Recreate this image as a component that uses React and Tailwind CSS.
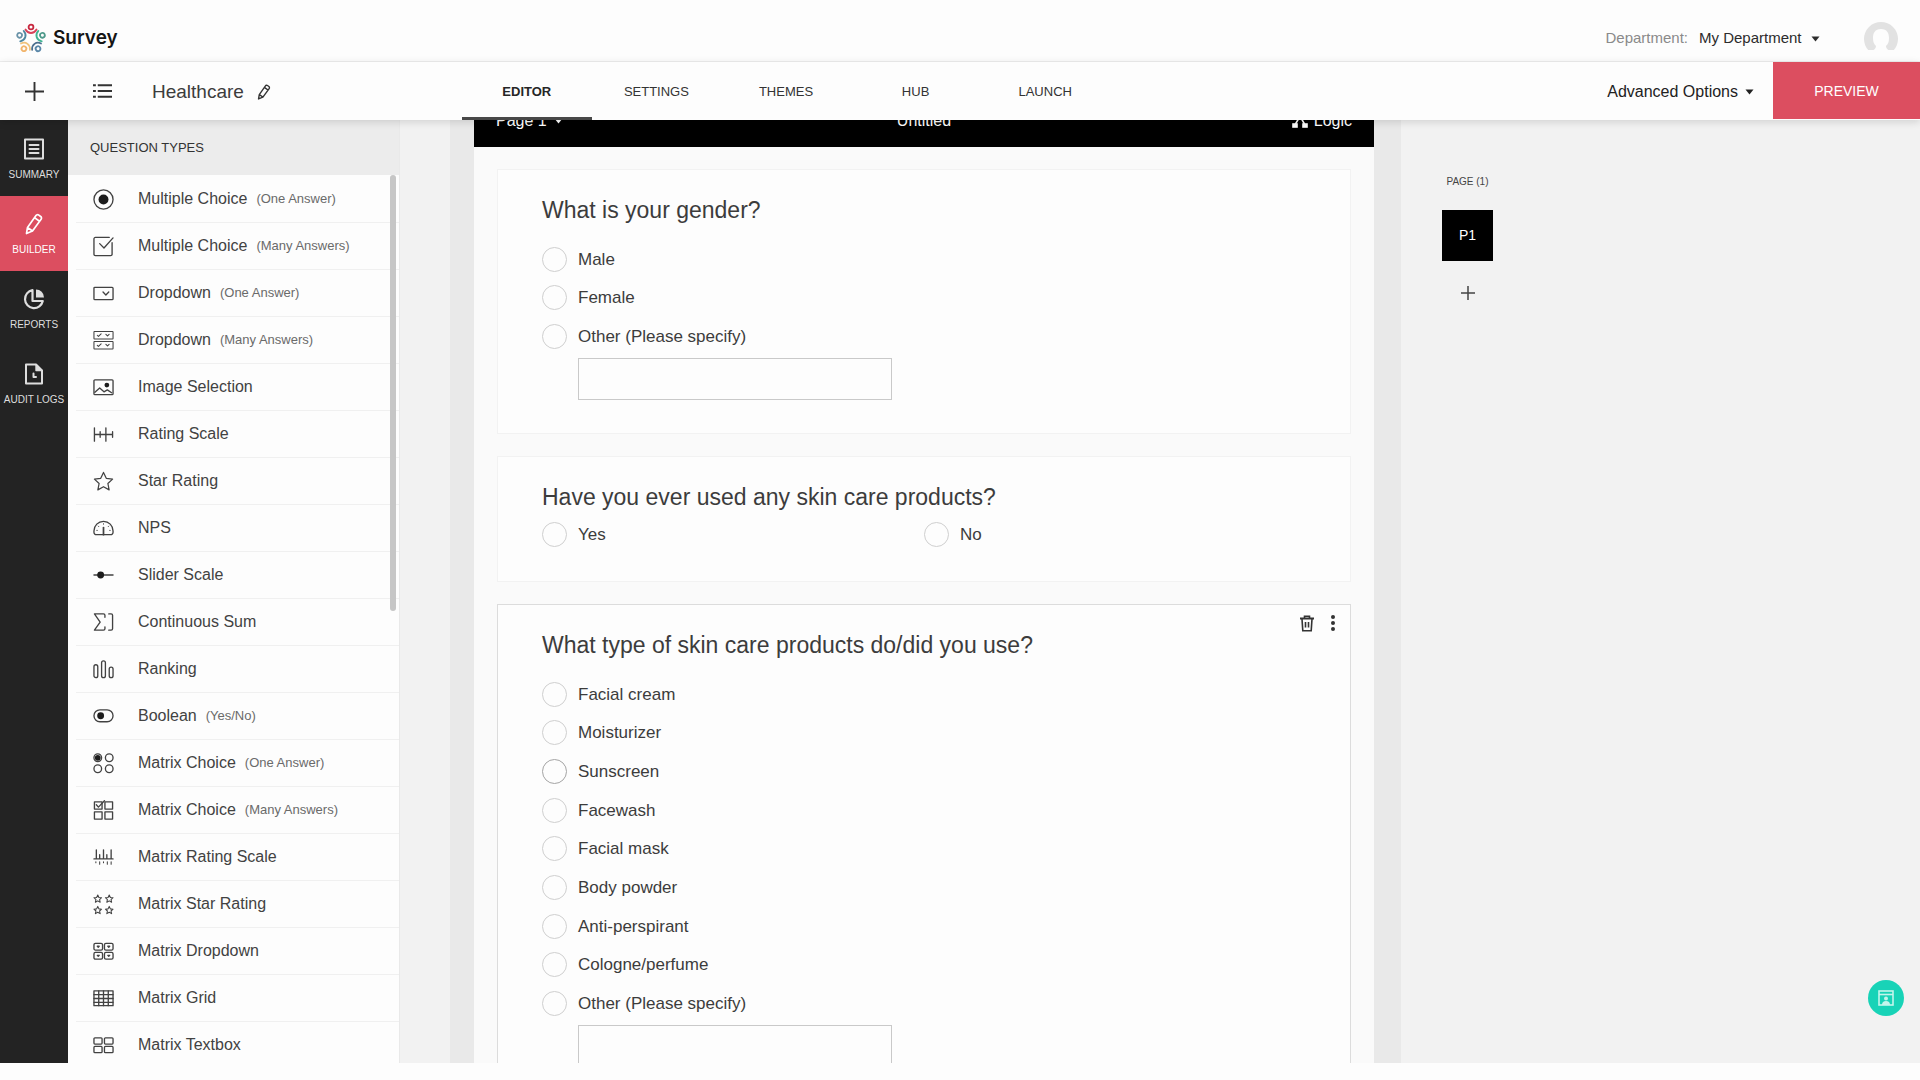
import { useState } from 'react';

const starPath = 'M11 1.5l2.9 6.2 6.6.8-4.9 4.6 1.3 6.7-5.9-3.3-5.9 3.3 1.3-6.7L1.5 8.5l6.6-.8z';
const smallStar = 'M0-4l1.2 2.6 2.8.3-2.1 1.9.6 2.8L0 2.2l-2.5 1.4.6-2.8L-4-1.1l2.8-.3z';

function Glyph({ children, size = 21 }) {
  return (
    <svg
      width={size}
      height={size}
      viewBox="0 0 22 22"
      fill="none"
      stroke="currentColor"
      strokeWidth="1.4"
      strokeLinecap="round"
      strokeLinejoin="round"
      className="shrink-0"
      aria-hidden="true"
    >
      {children}
    </svg>
  );
}

function Caret({ className }) {
  return (
    <svg width="9" height="6" viewBox="0 0 9 6" fill="currentColor" className={className} aria-hidden="true">
      <path d="M.5.5h8l-4 5z" />
    </svg>
  );
}

const questionTypes = [
  {
    name: 'Multiple Choice',
    hint: '(One Answer)',
    icon: (
      <>
        <circle cx="11" cy="11" r="10" />
        <circle cx="11" cy="11" r="5.2" fill="#1c1c1c" stroke="none" />
      </>
    ),
  },
  {
    name: 'Multiple Choice',
    hint: '(Many Answers)',
    icon: (
      <>
        <path d="M17 1.5H2.5A1.500 1.500 0 0 0 1 3v16a1.500 1.500 0 0 0 1.500 1.500h16A1.500 1.500 0 0 0 20 19V7" />
        <path d="M7 8l4.500 4.500L21 2" />
      </>
    ),
  },
  {
    name: 'Dropdown',
    hint: '(One Answer)',
    icon: (
      <>
        <rect x="1" y="4.5" width="20" height="13" rx="1" />
        <path d="M10.500 9.500l3 3 3-3" />
      </>
    ),
  },
  {
    name: 'Dropdown',
    hint: '(Many Answers)',
    icon: (
      <g strokeWidth="1.1">
        <rect x="1" y="1.5" width="20" height="8" rx=".5" />
        <rect x="1" y="12" width="20" height="8" rx=".5" />
        <path d="M4.500 5.500l1.200 1.200L8.500 4M13.500 4.500l1.700 1.700 1.700-1.700M4.500 16l1.200 1.200L8.500 14.500M13.500 15l1.700 1.700 1.700-1.700" />
      </g>
    ),
  },
  {
    name: 'Image Selection',
    icon: (
      <>
        <rect x="1" y="3" width="20" height="15.5" rx="1" />
        <circle cx="14.5" cy="8.5" r="2.5" fill="#1c1c1c" stroke="none" />
        <path d="M2 16l5-4.500 4.500 4 3.500-2 4.500 3" />
      </>
    ),
  },
  {
    name: 'Rating Scale',
    icon: <path d="M1.500 4v14M7.500 8v6M13.500 4v14M20.500 8v6M1.500 11h19" />,
  },
  { name: 'Star Rating', icon: <path d={starPath} strokeWidth="1.3" /> },
  {
    name: 'NPS',
    icon: (
      <>
        <path d="M3.500 17.500A2.500 2.500 0 0 1 1 15v-1.500a10 10 0 0 1 20 0V15a2.500 2.500 0 0 1-2.500 2.500z" />
        <path d="M11 10v7.500" strokeWidth="1.8" />
        <path d="M11 6v.5M5.500 8.500l.5.5M16.500 8.500l-.5.5M4 13h.5M17.500 13h.5" strokeWidth="1" />
      </>
    ),
  },
  {
    name: 'Slider Scale',
    icon: (
      <>
        <path d="M1 10.500h20" />
        <circle cx="8" cy="10.5" r="3.6" fill="#1c1c1c" stroke="none" />
      </>
    ),
  },
  {
    name: 'Continuous Sum',
    icon: (
      <path d="M12.500 5.500v-2Q12.500 2 11 2H1.500l6 8.500-6 8.500H11q1.500 0 1.500-1.500v-2M16.500 2H19q1.500 0 1.500 1.500v14q0 1.500-1.500 1.500h-2.500" />
    ),
  },
  {
    name: 'Ranking',
    icon: (
      <>
        <rect x="1" y="6" width="4" height="13.5" rx="2" />
        <rect x="9" y="2" width="4" height="17.5" rx="2" />
        <rect x="17" y="8.5" width="4" height="11" rx="2" />
      </>
    ),
  },
  {
    name: 'Boolean',
    hint: '(Yes/No)',
    icon: (
      <>
        <rect x="1" y="4" width="20" height="12.5" rx="6.2" />
        <circle cx="8" cy="10.2" r="3.6" fill="#1c1c1c" stroke="none" />
      </>
    ),
  },
  {
    name: 'Matrix Choice',
    hint: '(One Answer)',
    icon: (
      <>
        <circle cx="5" cy="5" r="4" />
        <circle cx="5" cy="5" r="3" fill="#1c1c1c" stroke="none" />
        <circle cx="17" cy="5" r="4" />
        <circle cx="5" cy="16.5" r="4" />
        <circle cx="17" cy="16.5" r="4" />
      </>
    ),
  },
  {
    name: 'Matrix Choice',
    hint: '(Many Answers)',
    icon: (
      <>
        <rect x="1.5" y="2" width="8" height="7.5" />
        <rect x="12.5" y="2" width="8" height="7.5" />
        <rect x="1.5" y="12.5" width="8" height="7.5" />
        <rect x="12.5" y="12.5" width="8" height="7.5" />
        <path d="M3.500 5l2.200 2.500L12 .8" />
      </>
    ),
  },
  {
    name: 'Matrix Rating Scale',
    icon: (
      <>
        <path d="M1 12.500h20M3.500 3v9.500M7 8v4.500M11 3v9.500M14.500 8v4.500M19 3v9.500" />
        <path d="M3 15.500v1M7 15.500v2.500M11 15.500v1M15 15.500v2.500M19 15.500v2.500" strokeWidth="1.1" />
      </>
    ),
  },
  {
    name: 'Matrix Star Rating',
    icon: (
      <g strokeWidth="1.1">
        <path d={smallStar} transform="translate(5 5)" />
        <path d={smallStar} transform="translate(17 5)" />
        <path d={smallStar} transform="translate(5 17)" />
        <path d={smallStar} transform="translate(17 17)" />
      </g>
    ),
  },
  {
    name: 'Matrix Dropdown',
    icon: (
      <>
        <rect x="1" y="2.5" width="9" height="7" rx="1.5" />
        <rect x="12" y="2.5" width="9" height="7" rx="1.5" />
        <rect x="1" y="12" width="9" height="7" rx="1.5" />
        <rect x="12" y="12" width="9" height="7" rx="1.5" />
        <path d="M4.500 5.500l1 1 1-1zM15.500 5.500l1 1 1-1zM4.500 15l1 1 1-1zM15.500 15l1 1 1-1z" />
      </>
    ),
  },
  {
    name: 'Matrix Grid',
    icon: (
      <>
        <rect x="1" y="3" width="20" height="15.5" />
        <path d="M1 7h20M1 11h20M1 15h20M6 3v15.500M11 3v15.500M16 3v15.500" />
      </>
    ),
  },
  {
    name: 'Matrix Textbox',
    icon: (
      <>
        <rect x="1" y="3" width="8.5" height="6.5" rx="1" />
        <rect x="12" y="3" width="9" height="6.5" rx="1" />
        <rect x="1" y="12" width="8.5" height="6.5" rx="1" />
        <rect x="12" y="12" width="9" height="6.5" rx="1" />
      </>
    ),
  },
];

// Long slim pencil leaning to the right
const pencil = (
  <path d="M3.500 20.500l1-6L13 2.500a2 2 0 0 1 2.800-.4l1.900 1.400a2 2 0 0 1 .4 2.800L9.500 18zM11.500 4.600l5 3.700M4.500 14.500l5 3.500" />
);

const navItems = [
  {
    label: 'SUMMARY',
    icon: (
      <>
        <rect x="2" y="1.5" width="18" height="19" strokeWidth="2" />
        <path d="M6.500 7h9M6.500 11h9M6.500 15h9" strokeWidth="2" />
      </>
    ),
  },
  { label: 'BUILDER', icon: <g strokeWidth="1.7">{pencil}</g> },
  {
    label: 'REPORTS',
    icon: (
      <>
        <path d="M9.500 2.200A9 9 0 1 0 19.800 13H9.500z" strokeWidth="2.2" />
        <path d="M13 1.500a8 8 0 0 1 8 8h-8z" fill="currentColor" stroke="none" />
      </>
    ),
  },
  {
    label: 'AUDIT LOGS',
    icon: (
      <>
        <path d="M13 1.500H3v19h16v-13z" strokeWidth="2" />
        <path d="M13 1.500v6h6z" fill="currentColor" />
        <path d="M10.500 10.500V14H13" strokeWidth="2" />
      </>
    ),
  },
];

const questions = [
  {
    id: 'gender',
    title: 'What is your gender?',
    heading: 'mb-4',
    layout: 'min-h-[116px]',
    card: 'border-[#f2f2f2] pb-[33px]',
    options: ['Male', 'Female', 'Other (Please specify)'],
    other: true,
  },
  {
    id: 'used',
    title: 'Have you ever used any skin care products?',
    heading: 'mb-1',
    layout: 'min-h-[39px] grid-cols-2',
    card: 'border-[#f2f2f2] pb-[27px]',
    options: ['Yes', 'No'],
  },
  {
    id: 'products',
    title: 'What type of skin care products do/did you use?',
    heading: 'mb-4',
    layout: 'min-h-[348px]',
    card: 'border-[#dcdcdc] pb-[33px]',
    options: [
      'Facial cream',
      'Moisturizer',
      'Sunscreen',
      'Facewash',
      'Facial mask',
      'Body powder',
      'Anti-perspirant',
      'Cologne/perfume',
      'Other (Please specify)',
    ],
    hovered: 'Sunscreen',
    other: true,
    selected: true,
  },
];

// One little figure of the logo ring: a head with raised arms
function Figure({ angle, head, arms }) {
  return (
    <g transform={`rotate(${angle} 16 16)`} fill="none" strokeLinecap="round" strokeWidth="1.8">
      <circle cx="16" cy="4" r="2.4" stroke={head} />
      <path d="M10.500 6.500q2 3.500 5.500 3.500t5.500-3.500" stroke={arms} />
    </g>
  );
}

function Logo() {
  return (
    <a href="#" className="flex items-center gap-[6px] font-['Inter','Open_Sans',sans-serif] text-[19px] font-semibold text-[#151515]">
      <svg width="32" height="32" viewBox="0 0 32 32" aria-hidden="true">
        <Figure angle={0} head="#c8283f" arms="#d8435a" />
        <Figure angle={72} head="#4f9a8b" arms="#3fb491" />
        <Figure angle={144} head="#5a87a8" arms="#4c6f8e" />
        <Figure angle={216} head="#f1b46b" arms="#efc27c" />
        <Figure angle={288} head="#6a93a8" arms="#4d87a0" />
      </svg>
      Survey
    </a>
  );
}

function TopBar() {
  return (
    <header className="flex h-[62px] shrink-0 items-center justify-between border-b border-[#efefef] pt-4 pr-[22px] pl-[15px]">
      <Logo />
      <div className="flex items-center text-[15px]">
        <label htmlFor="department" className="text-[#8a8a8a]">Department:</label>
        <div className="relative ml-[11px] flex items-center text-[#2c2c2c]">
          <select id="department" className="w-[124px] appearance-none bg-transparent">
            <option>My Department</option>
          </select>
          <Caret className="pointer-events-none absolute right-[3px]" />
        </div>
        <button type="button" aria-label="Account" className="ml-[41px]">
          <svg width="34" height="34" viewBox="0 0 34 34" aria-hidden="true">
            <circle cx="17" cy="17" r="17" fill="#e2e2e2" />
            <path d="M17 7c-6 0-8 4-8 9 0 4 1 6 3 8 0 4-4 4-8 7l3 3h20l3-3c-4-3-8-3-8-7 2-2 3-4 3-8 0-5-2-9-8-9z" fill="#fdfdfd" />
            <rect y="28" width="34" height="6" fill="#fdfdfd" />
          </svg>
        </button>
      </div>
    </header>
  );
}

function Toolbar({ tab, onTab }) {
  const tabs = ['EDITOR', 'SETTINGS', 'THEMES', 'HUB', 'LAUNCH'];

  return (
    <div className="relative z-10 flex h-[58px] shrink-0 items-stretch bg-[#fdfdfd] shadow-[0_2px_8px_rgba(0,0,0,0.14)]">
      <button type="button" aria-label="Add survey" className="flex w-[68px] items-center justify-center text-[#333]">
        <svg width="19" height="19" viewBox="0 0 20 20" stroke="currentColor" strokeWidth="2" aria-hidden="true">
          <path d="M10 0v20M0 10h20" />
        </svg>
      </button>
      <button type="button" aria-label="Survey list" className="flex w-[68px] items-center justify-center text-[#333]">
        <svg width="19" height="16" viewBox="0 0 20 16" stroke="currentColor" strokeWidth="2" aria-hidden="true">
          <path d="M0 2h3M0 8h3M0 14h3M5 2h15M5 8h15M5 14h15" />
        </svg>
      </button>
      <div className="flex w-[326px] items-center gap-3 pt-[2px] pl-4">
        <h1 className="text-[19px] text-[#3c3c3c]">Healthcare</h1>
        <button type="button" aria-label="Rename survey" className="text-[#333]">
          <Glyph size={16}>
            <g strokeWidth="1.9">{pencil}</g>
          </Glyph>
        </button>
      </div>
      <nav className="grid w-[648px] grid-cols-5 text-[13px]" aria-label="Survey sections">
        {tabs.map((name) => (
          <button
            key={name}
            type="button"
            onClick={() => onTab(name)}
            className={
              name === tab
                ? 'border-b-3 border-[#484848] pt-[5px] font-bold text-[#262626]'
                : 'border-b-3 border-transparent pt-[5px] text-[#333]'
            }
          >
            {name}
          </button>
        ))}
      </nav>
      <button type="button" className="mr-[19px] ml-auto flex items-center gap-[7px] pt-[2px] text-base text-[#222]">
        Advanced Options
        <Caret />
      </button>
      <button type="button" className="mb-px w-[147px] bg-[#dc4e60] pt-[2px] text-[14px] text-white">PREVIEW</button>
    </div>
  );
}

function SideNav() {
  return (
    <nav className="w-[68px] shrink-0 bg-[#232323] pt-px text-[10px] leading-3 text-[#dedede]" aria-label="Main">
      {navItems.map((item) => (
        <a
          key={item.label}
          href="#"
          className={
            item.label === 'BUILDER'
              ? 'flex h-[75px] flex-col items-center gap-[9px] bg-[#dc4e60] pt-[17px] whitespace-nowrap text-white'
              : 'flex h-[75px] flex-col items-center gap-[9px] pt-[17px] whitespace-nowrap'
          }
        >
          <Glyph size={22}>{item.icon}</Glyph>
          {item.label}
        </a>
      ))}
    </nav>
  );
}

function QuestionTypes() {
  return (
    <aside className="flex w-[332px] shrink-0 flex-col border-r border-[#e9e9e9] bg-[#fdfdfd]">
      <h2 className="flex h-[55px] shrink-0 items-center bg-[#ececec] pl-[22px] text-[13px] font-medium text-[#333]">
        QUESTION TYPES
      </h2>
      <div className="relative min-h-0 flex-1 overflow-hidden">
        <ul className="pt-px">
          {questionTypes.map((type) => (
            <li key={type.name + (type.hint || '')} className="ml-2 border-b border-[#f0f0f0]">
              <button type="button" className="flex h-[46px] w-full items-center pl-[17px] text-base text-[#424242]">
                <Glyph>{type.icon}</Glyph>
                <span className="ml-6">{type.name}</span>
                {type.hint ? <span className="ml-[9px] text-[13px] text-[#6a6a6a]">{type.hint}</span> : null}
              </button>
            </li>
          ))}
        </ul>
        <div className="absolute top-0 right-[3px] h-[436px] w-[6px] rounded-full bg-[#c6c6c6]" />
      </div>
    </aside>
  );
}

function QuestionCard({ question }) {
  return (
    <fieldset className={`relative border bg-[#fdfdfd] px-[44px] pt-[26px] ${question.card}`}>
      <legend className={`float-left w-full text-[23px] leading-7 text-[#3c3c3c] ${question.heading}`}>
        {question.title}
      </legend>
      <div className={`clear-both grid ${question.layout}`}>
        {question.options.map((option) => (
          <label key={option} className="flex items-center gap-[11px] text-[17px] text-[#3c3c3c]">
            <input
              type="radio"
              name={question.id}
              className={
                option === question.hovered
                  ? 'size-[25px] appearance-none rounded-full border border-[#a4a4a4] checked:bg-[#444]'
                  : 'size-[25px] appearance-none rounded-full border border-[#cfcfcf] checked:bg-[#444]'
              }
            />
            {option}
          </label>
        ))}
      </div>
      {question.other ? (
        <input
          type="text"
          aria-label="Other, please specify"
          className="mt-[2px] ml-[36px] block h-[42px] w-[314px] border border-[#c9c9c9] bg-transparent px-2"
        />
      ) : null}
      {question.selected ? (
        <div className="absolute top-[9px] right-[10px] flex items-center gap-3 text-[#333]">
          <button type="button" aria-label="Delete question">
            <svg width="14" height="17" viewBox="0 0 14 17" fill="none" stroke="currentColor" strokeWidth="1.6" aria-hidden="true">
              <path d="M0 3.500h14" strokeWidth="2" />
              <path d="M4.500 3V1.200h5V3M2 4l.8 11.700h8.400L12 4M5.500 7v5.500M8.500 7v5.500" />
            </svg>
          </button>
          <button type="button" aria-label="Question menu">
            <svg width="14" height="18" viewBox="0 0 14 18" fill="currentColor" aria-hidden="true">
              <circle cx="7" cy="3" r="2" />
              <circle cx="7" cy="9" r="2" />
              <circle cx="7" cy="15" r="2" />
            </svg>
          </button>
        </div>
      ) : null}
    </fieldset>
  );
}

function SurveyPage() {
  return (
    <main className="ml-[50px] min-w-0 flex-1 overflow-hidden bg-[#e9e9e9] pr-[27px] pl-6">
      <div className="bg-[#fafafa]">
        <div className="-mt-[26px] grid h-[53px] grid-cols-3 items-center bg-black px-[22px] pt-px text-base text-white">
          <button type="button" className="flex items-center gap-[7px]">
            Page 1
            <Caret />
          </button>
          <span className="text-center">Untitled</span>
          <button type="button" className="flex items-center gap-[6px] justify-self-end">
            <svg width="16" height="16" viewBox="0 0 16 16" fill="none" stroke="currentColor" strokeWidth="1.6" aria-hidden="true">
              <circle cx="8" cy="3" r="2" />
              <path d="M7 5l-3.500 6M9 5l3.500 6" />
              <rect x="1" y="11" width="4" height="3" fill="currentColor" />
              <rect x="11" y="11" width="4" height="3" fill="currentColor" />
            </svg>
            Logic
          </button>
        </div>
        <div className="flex flex-col gap-[22px] px-[23px] py-[22px]">
          {questions.map((question) => (
            <QuestionCard key={question.id} question={question} />
          ))}
        </div>
      </div>
    </main>
  );
}

function PageList() {
  return (
    <aside className="w-[519px] shrink-0">
      <div className="flex w-[133px] flex-col items-center pt-[55px]">
        <h2 className="text-[10px] leading-[14px] text-[#444]">PAGE (1)</h2>
        <button type="button" className="mt-[21px] size-[51px] bg-black text-[14px] text-white">P1</button>
        <button type="button" aria-label="Add page" className="mt-[25px] text-[#444]">
          <svg width="14" height="14" viewBox="0 0 14 14" stroke="currentColor" strokeWidth="1.5" aria-hidden="true">
            <path d="M7 0v14M0 7h14" />
          </svg>
        </button>
      </div>
    </aside>
  );
}

function App() {
  const [tab, setTab] = useState('EDITOR');

  return (
    <div className="flex h-screen flex-col overflow-hidden bg-[#fdfdfd] pb-[17px] font-['Liberation_Sans',Arial,sans-serif]">
      <TopBar />
      <Toolbar tab={tab} onTab={setTab} />
      <div className="flex min-h-0 flex-1 bg-[#f2f2f2]">
        <SideNav />
        <QuestionTypes />
        <SurveyPage />
        <PageList />
      </div>
      <button
        type="button"
        aria-label="Help"
        className="fixed right-4 bottom-[64px] flex size-[36px] items-center justify-center rounded-full bg-[#18d3b7] text-[#c4f5ec]"
      >
        <svg width="16" height="16" viewBox="0 0 16 16" fill="none" stroke="currentColor" strokeWidth="1.6" aria-hidden="true">
          <rect x="1" y="1" width="14" height="14" />
          <path d="M1 4.500h14" />
          <circle cx="8" cy="8.5" r="2" fill="currentColor" stroke="none" />
          <path d="M4 15q0-4 4-4t4 4z" fill="currentColor" stroke="none" />
        </svg>
      </button>
    </div>
  );
}

export default App;
